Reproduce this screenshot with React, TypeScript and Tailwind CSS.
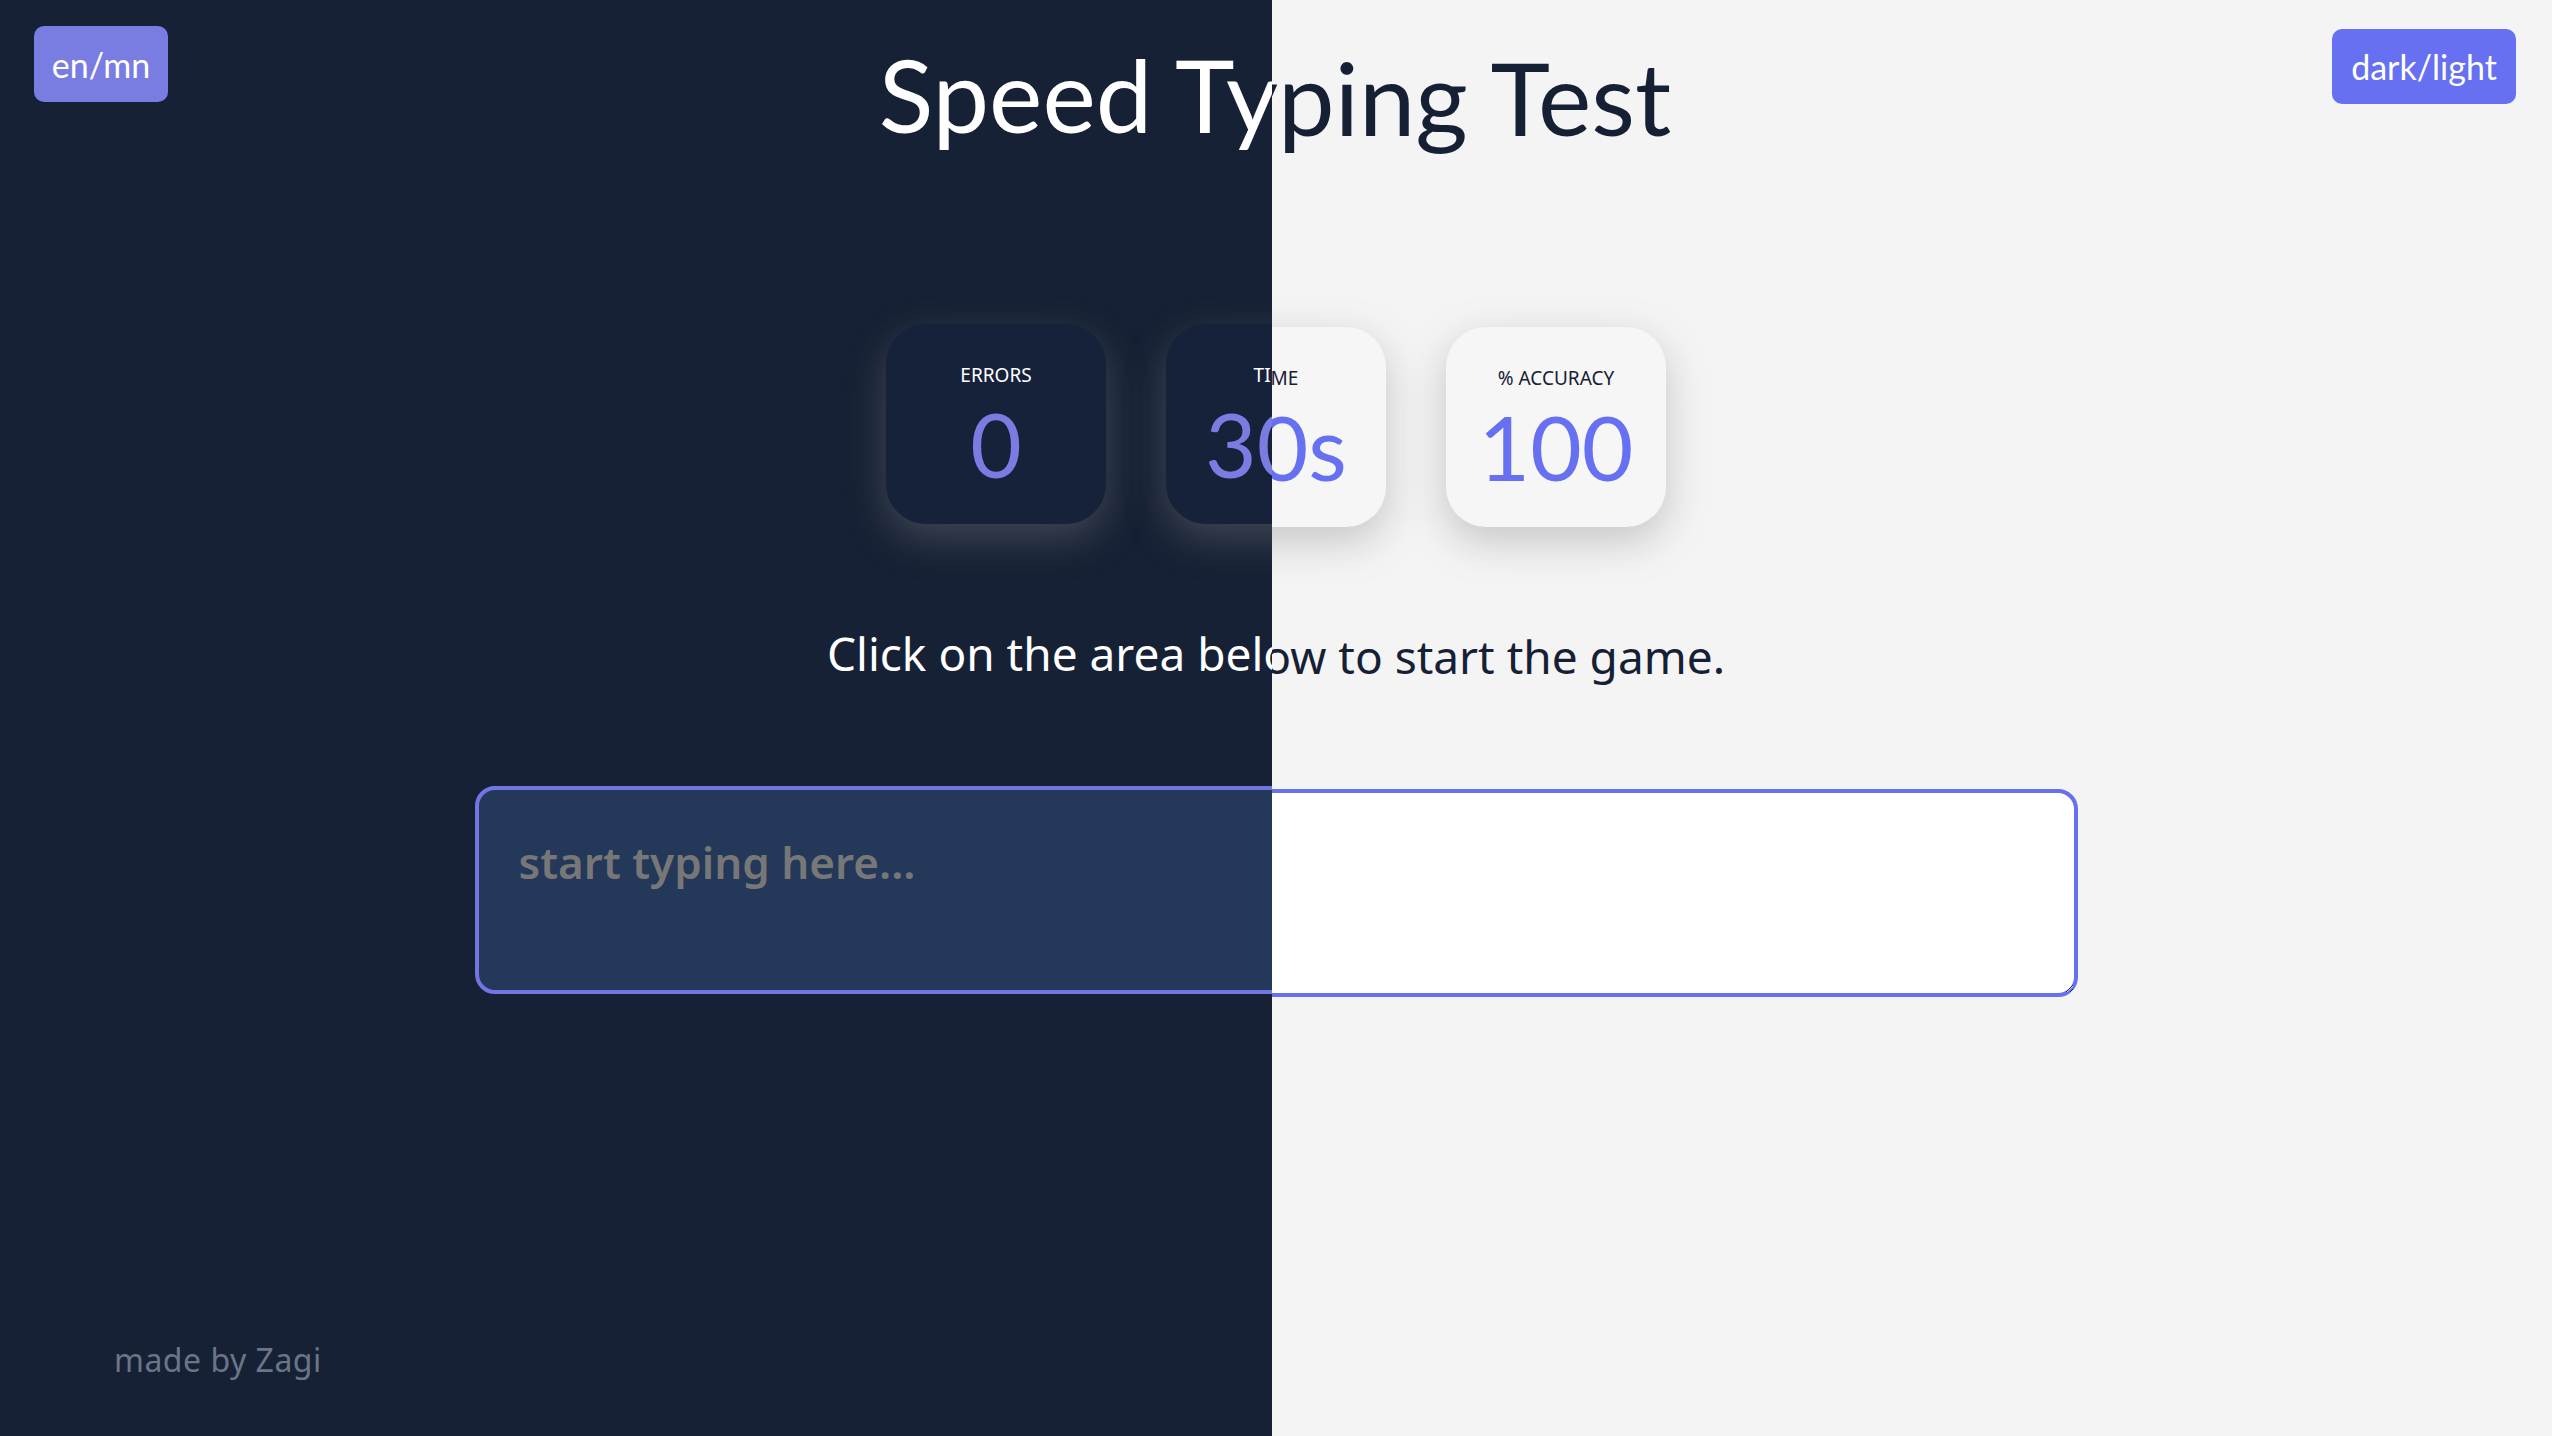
import React from "react";

type Theme = "dark" | "light";

function Stat({ label, value, theme }: { label: string; value: string; theme: Theme }) {
  const dark = theme === "dark";
  return (
    <div
      className={`flex flex-col items-center w-[220px] h-[200px] rounded-[40px] pt-[42px] shadow-[0_14px_40px_rgba(128,128,128,0.4)] ${
        dark ? "bg-[#16223a]" : "bg-[#f6f6f6]"
      }`}
    >
      <span
        className={`font-['Noto_Sans',sans-serif] text-[19px] leading-none uppercase ${
          dark ? "text-white" : "text-[#152034]"
        }`}
      >
        {label}
      </span>
      <span className={`text-[89px] leading-none mt-[14px] ${dark ? "text-[#7a7ce2]" : "text-[#6670f0]"}`}>{value}</span>
    </div>
  );
}

function Page({ theme }: { theme: Theme }) {
  const dark = theme === "dark";
  return (
    <div
      className={`w-[2552px] h-[1436px] flex flex-col font-['Lato',sans-serif] ${
        dark ? "bg-[#162135] text-white" : "bg-[#f4f4f4] text-[#152034] pt-[3px]"
      }`}
    >
      <header className="grid grid-cols-[1fr_auto_1fr] items-start pt-[26px] pl-[34px] pr-[36px]">
        <button className="justify-self-start w-[134px] h-[76px] rounded-[10px] bg-[#797ce0] text-white text-[34px] flex items-center justify-center">
          en/mn
        </button>
        <h1 className="mt-[18px] text-[101px] leading-none">Speed Typing Test</h1>
        <button className="justify-self-end w-[184px] h-[75px] rounded-[10px] bg-[#6670f0] text-white text-[34px] flex items-center justify-center">
          dark/light
        </button>
      </header>

      <section className="flex justify-center gap-[60px] mt-[179px]">
        <Stat label="Errors" value="0" theme={theme} />
        <Stat label="Time" value="30s" theme={theme} />
        <Stat label="% Accuracy" value="100" theme={theme} />
      </section>

      <p className="mt-[106px] text-center font-['Noto_Sans',sans-serif] text-[46px] leading-none">
        Click on the area below to start the game.
      </p>

      <div className="flex justify-center mt-[110px]">
        <textarea
          placeholder="start typing here..."
          className={`w-[1603px] h-[208px] rounded-[20px] border-[4px] px-[40px] pt-[46px] font-['Noto_Sans',sans-serif] text-[44px] leading-[1.2] font-semibold outline-none placeholder:text-[#777777] ${
            dark ? "bg-[#24385a] border-[#7375e3] text-white" : "bg-white border-[#6670f0] text-[#152034]"
          }`}
        />
      </div>

      <footer className="mt-auto pl-[114px] pb-[60px] font-['Noto_Sans',sans-serif] text-[32px] tracking-[0.5px] leading-none text-[#6b7588]">
        made by Zagi
      </footer>
    </div>
  );
}

export default function App() {
  return (
    <div className="flex w-[2552px] h-[1436px] overflow-hidden">
      <div className="w-[1272px] shrink-0 overflow-hidden">
        <Page theme="dark" />
      </div>
      <div className="flex-1 overflow-hidden">
        <div className="ml-[-1272px]">
          <Page theme="light" />
        </div>
      </div>
    </div>
  );
}
